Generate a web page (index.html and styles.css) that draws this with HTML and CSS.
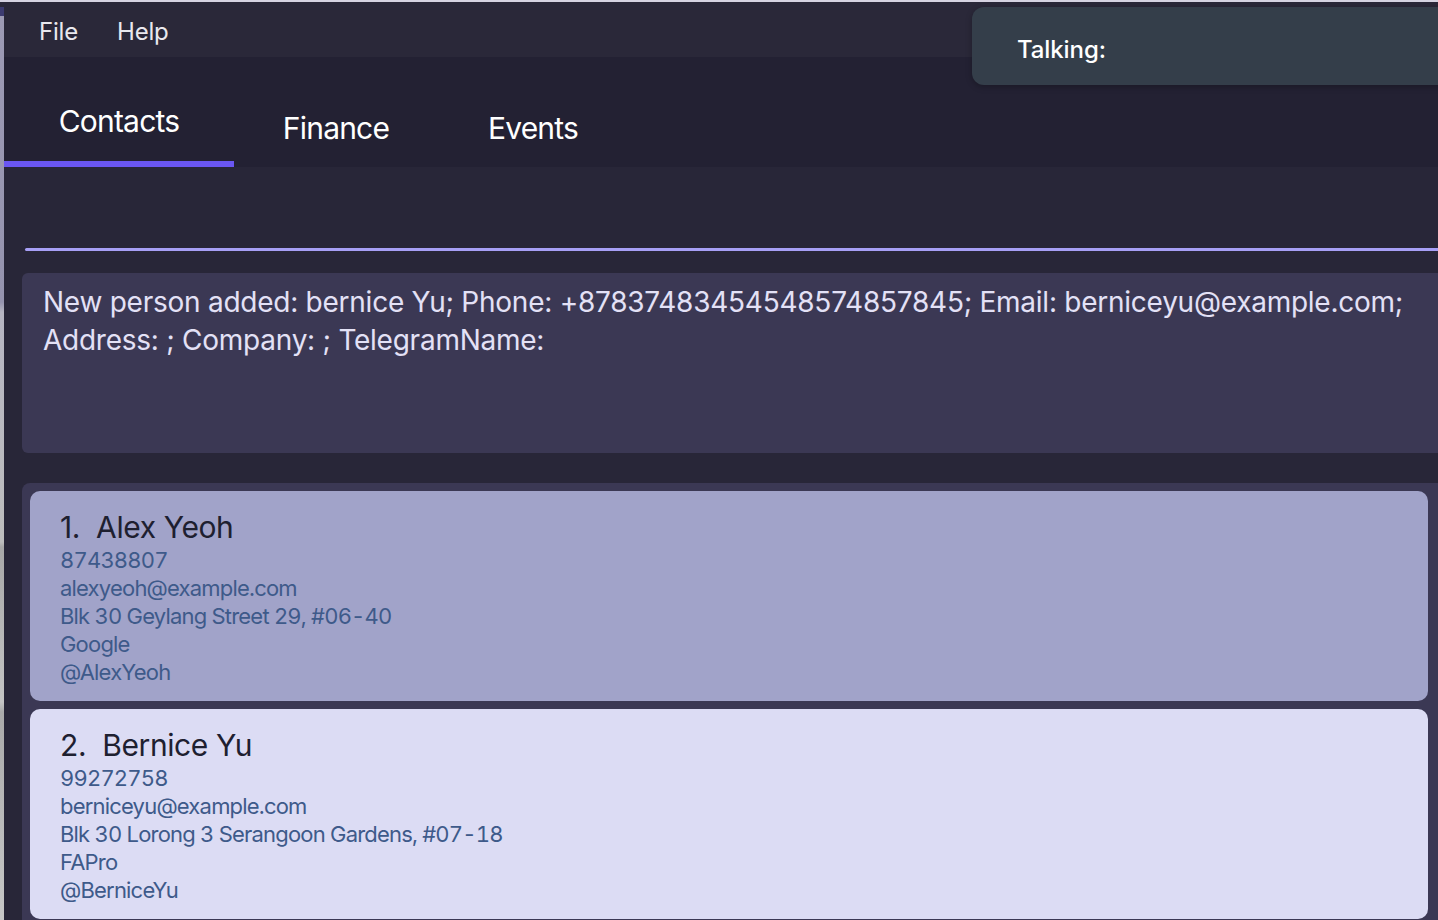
FILE: index.html
```html
<!DOCTYPE html>
<html lang="en">
<head>
<meta charset="utf-8">
<title>Contacts</title>
<link rel="stylesheet" href="styles.css">
</head>
<body>
<div class="screen">
  <div class="edge"></div>
  <div class="app">
    <div class="menubar">
      <span class="menu-item">File</span>
      <span class="menu-item">Help</span>
    </div>
    <div class="tabbar">
      <div class="tab tab-contacts active">Contacts</div>
      <div class="tab tab-finance">Finance</div>
      <div class="tab tab-events">Events</div>
    </div>
    <div class="content">
      <div class="command"><div class="command-line"></div></div>
      <div class="result">New person added: bernice Yu; Phone: +87837483454548574857845; Email: berniceyu@example.com; Address: ; Company: ; TelegramName:</div>
      <div class="list">
        <div class="card card-selected">
          <div class="name">1.&nbsp; Alex Yeoh</div>
          <div class="detail">87438807</div>
          <div class="detail">alexyeoh@example.com</div>
          <div class="detail">Blk 30 Geylang Street 29, #06-40</div>
          <div class="detail">Google</div>
          <div class="detail">@AlexYeoh</div>
        </div>
        <div class="card">
          <div class="name">2.&nbsp; Bernice Yu</div>
          <div class="detail">99272758</div>
          <div class="detail">berniceyu@example.com</div>
          <div class="detail">Blk 30 Lorong 3 Serangoon Gardens, #07-18</div>
          <div class="detail">FAPro</div>
          <div class="detail">@BerniceYu</div>
        </div>
      </div>
    </div>
  </div>
  <div class="talking">Talking:</div>
</div>
</body>
</html>
```

FILE: styles.css
```css
* { box-sizing: border-box; }
html, body { margin: 0; padding: 0; }
body {
  width: 1438px;
  height: 920px;
  overflow: hidden;
  background: #282638;
  font-family: Inter, "Noto Sans", sans-serif;
}
.screen {
  position: relative;
  display: flex;
  width: 1438px;
  height: 920px;
  border-top: 2px solid #d6d3e2;
}
.edge {
  width: 4px;
  flex: none;
  background: linear-gradient(#2a2839 0, #2a2839 5px, #3c3b70 5px, #3c3b70 14px, #9c9ab4 14px, #9593ae 300px, #b6b5c2 310px, #bdbdbd 540px, #a8a8a8 545px, #c4c4c4 700px, #aaaaaa 710px, #c8c8c8 920px);
}
.app {
  flex: 1;
  display: flex;
  flex-direction: column;
  min-width: 0;
}
.menubar {
  height: 55px;
  background: #2a2839;
  display: flex;
  align-items: center;
  padding-left: 35px;
  padding-top: 4px;
  gap: 39px;
}
.menu-item {
  color: #e9e8ee;
  font-size: 24px;
  letter-spacing: -0.2px;
}
.tabbar {
  height: 110px;
  background: #232133;
  display: flex;
}
.tab {
  color: #ffffff;
  font-size: 30px;
  letter-spacing: -0.8px;
  text-align: center;
  padding-top: 54px;
  line-height: 34px;
}
.tab-contacts { width: 230px; padding-top: 47px; }
.tab-finance { width: 204px; }
.tab-events { width: 190px; }
.tab.active {
  border-bottom: 6px solid #6a56f2;
}
.content {
  flex: 1;
  display: flex;
  flex-direction: column;
  padding-left: 18px;
}
.command {
  height: 84px;
  display: flex;
  align-items: flex-end;
  padding-left: 3px;
}
.command-line {
  flex: 1;
  height: 3px;
  background: #a79ff6;
  border-radius: 2px 0 0 2px;
}
.result {
  margin-top: 22px;
  height: 180px;
  background: #3b3854;
  border-radius: 6px 0 0 6px;
  color: #e3e1f6;
  font-size: 28px;
  line-height: 38px;
  letter-spacing: -0.25px;
  padding: 10px 20px 0 21px;
}
.list {
  margin-top: 30px;
  flex: 1;
  background: #3b3854;
  border-radius: 8px 0 0 0;
  padding: 8px 10px 0 8px;
  display: flex;
  flex-direction: column;
  gap: 8px;
}
.card {
  height: 210px;
  flex: none;
  background: #dcdcf4;
  border-radius: 10px;
  padding: 16px 0 0 30px;
}
.card-selected { background: #a1a3c9; }
.name {
  color: #1e2030;
  font-size: 30px;
  line-height: 40px;
  letter-spacing: -0.4px;
  margin-bottom: -1px;
}
.detail {
  color: #3e5a8a;
  font-size: 22px;
  line-height: 28px;
  letter-spacing: -0.8px;
  font-variant-numeric: tabular-nums;
}
.talking {
  position: absolute;
  top: 5px;
  left: 972px;
  width: 480px;
  height: 78px;
  background: #343e4a;
  border-radius: 12px;
  box-shadow: 0 2px 6px rgba(0,0,0,0.25);
  color: #ffffff;
  font-size: 24px;
  font-weight: 500;
  padding: 30px 0 0 45px;
  line-height: 26px;
  letter-spacing: -0.1px;
}
```
